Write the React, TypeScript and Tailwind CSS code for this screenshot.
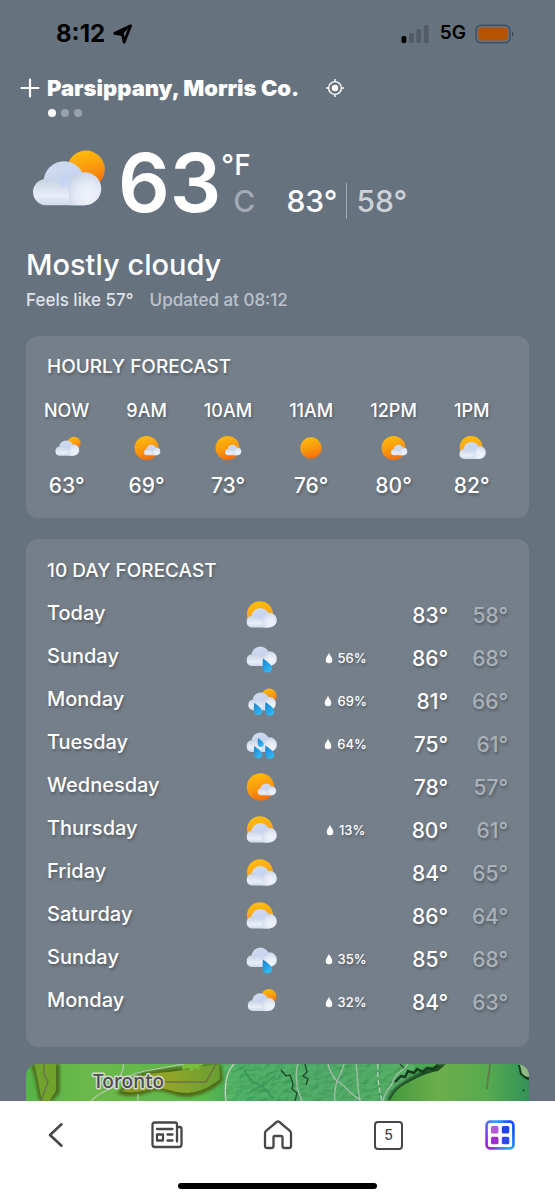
import type { ReactNode } from "react";

type Sky =
  | "mostlyCloudy"
  | "mostlySunny"
  | "sunny"
  | "partly"
  | "shower"
  | "sunShower"
  | "rain";

const hours: { label: string; sky: Sky; temp: number }[] = [
  { label: "NOW", sky: "mostlyCloudy", temp: 63 },
  { label: "9AM", sky: "mostlySunny", temp: 69 },
  { label: "10AM", sky: "mostlySunny", temp: 73 },
  { label: "11AM", sky: "sunny", temp: 76 },
  { label: "12PM", sky: "mostlySunny", temp: 80 },
  { label: "1PM", sky: "partly", temp: 82 },
];

const days: { day: string; sky: Sky; rain?: number; high: number; low: number }[] = [
  { day: "Today", sky: "partly", high: 83, low: 58 },
  { day: "Sunday", sky: "shower", rain: 56, high: 86, low: 68 },
  { day: "Monday", sky: "sunShower", rain: 69, high: 81, low: 66 },
  { day: "Tuesday", sky: "rain", rain: 64, high: 75, low: 61 },
  { day: "Wednesday", sky: "mostlySunny", high: 78, low: 57 },
  { day: "Thursday", sky: "partly", rain: 13, high: 80, low: 61 },
  { day: "Friday", sky: "partly", high: 84, low: 65 },
  { day: "Saturday", sky: "partly", high: 86, low: 64 },
  { day: "Sunday", sky: "shower", rain: 35, high: 85, low: 68 },
  { day: "Monday", sky: "mostlyCloudy", rain: 32, high: 84, low: 63 },
];

function Gradients() {
  return (
    <svg className="absolute size-0" aria-hidden="true">
      <defs>
        <linearGradient id="sun" x1="0.35" y1="0" x2="0.65" y2="1">
          <stop offset="0" stopColor="#fdbb0b" />
          <stop offset="0.5" stopColor="#fa9a0c" />
          <stop offset="1" stopColor="#f5690c" />
        </linearGradient>
        <linearGradient id="sunPale" x1="0.4" y1="0" x2="0.6" y2="1">
          <stop offset="0" stopColor="#fdbd0e" />
          <stop offset="0.6" stopColor="#f9a414" />
          <stop offset="1" stopColor="#f18a14" />
        </linearGradient>
        <linearGradient id="cloudMid" x1="0.2" y1="0" x2="0.7" y2="1">
          <stop offset="0" stopColor="#d2dcec" />
          <stop offset="0.5" stopColor="#c6d4f1" />
          <stop offset="1" stopColor="#dfe7f7" />
        </linearGradient>
        <linearGradient id="cloudBase" x1="0" y1="0" x2="0" y2="1">
          <stop offset="0" stopColor="#c6d2e4" />
          <stop offset="0.65" stopColor="#e9eef8" />
          <stop offset="1" stopColor="#cfd9ec" />
        </linearGradient>
        <radialGradient id="cloudRight" cx="0.6" cy="0.7" r="0.8">
          <stop offset="0" stopColor="#f1f4fa" />
          <stop offset="0.5" stopColor="#e3e9f5" />
          <stop offset="1" stopColor="#c0cde1" />
        </radialGradient>
        <linearGradient id="drop" x1="0" y1="0" x2="0.6" y2="1">
          <stop offset="0" stopColor="#1382d0" />
          <stop offset="1" stopColor="#35b9f4" />
        </linearGradient>
      </defs>
    </svg>
  );
}

function Cloud({ x, y, scale = 1 }: { x: number; y: number; scale?: number }) {
  return (
    <g transform={`translate(${x} ${y}) scale(${scale})`}>
      <circle cx="14" cy="8.8" r="8.8" fill="url(#cloudMid)" />
      <path
        d="M5.6 18.9A5.7 5.7 0 0 1 5.6 7.6C9 7.2 12 8.4 13.6 11.5L23 12v6.900z"
        fill="url(#cloudBase)"
      />
      <path
        d="M22.9 4.700a7.100 7.100 0 1 1 0 14.200H16.500c.4-2-.7-4.600-.7-7.100a7.100 7.100 0 0 1 7.100-7.100z"
        fill="url(#cloudRight)"
      />
    </g>
  );
}

function Drop({ x, y, scale = 1 }: { x: number; y: number; scale?: number }) {
  return (
    <path
      transform={`translate(${x} ${y}) scale(${scale})`}
      d="M0.6 0C3 2.2 9.6 5.6 9.6 10A4.7 4.7 0 0 1 0.3 10C0 7 0 3 .6 0z"
      fill="url(#drop)"
    />
  );
}

const skies: Record<Sky, ReactNode> = {
  mostlyCloudy: (
    <>
      <circle cx="24" cy="10.5" r="7.5" fill="url(#sun)" />
      <Cloud x={2.2} y={7.3} scale={0.93} />
    </>
  ),
  mostlySunny: (
    <>
      <circle cx="15.5" cy="16" r="13.7" fill="url(#sun)" />
      <Cloud x={12.3} y={12.4} scale={0.63} />
    </>
  ),
  sunny: <circle cx="16" cy="16" r="12.2" fill="url(#sun)" />,
  partly: (
    <>
      <circle cx="15" cy="15.2" r="13" fill="url(#sunPale)" />
      <Cloud x={1} y={9} scale={1.03} />
    </>
  ),
  shower: (
    <>
      <Cloud x={1} y={4.5} scale={1.03} />
      <Drop x={17.5} y={16.6} />
    </>
  ),
  sunShower: (
    <>
      <circle cx="24.2" cy="11" r="7.5" fill="url(#sun)" />
      <Cloud x={2.7} y={7.4} scale={0.94} />
      <Drop x={8.8} y={17.7} scale={0.88} />
      <Drop x={20} y={17} scale={0.98} />
    </>
  ),
  rain: (
    <>
      <Cloud x={1} y={4.5} scale={1.03} />
      <Drop x={12.7} y={10} scale={0.64} />
      <Drop x={8.8} y={18} scale={0.88} />
      <Drop x={20} y={17.5} scale={0.96} />
    </>
  ),
};

function SkyIcon({ sky, className }: { sky: Sky; className: string }) {
  return (
    <svg viewBox="0 0 32 32" className={className} aria-hidden="true">
      {skies[sky]}
    </svg>
  );
}

function StatusBar() {
  return (
    <div className="flex h-[67px] items-center justify-between pr-10 pl-14 text-black">
      <div className="flex items-center gap-2">
        <span className="text-2xl font-bold">8:12</span>
        <svg viewBox="0 0 20 20" className="size-5" aria-hidden="true">
          <path
            d="M17.6 1.8 1.8 9.3l7.8 1.3 1.5 7.6z"
            fill="none"
            stroke="black"
            strokeWidth="2.8"
            strokeLinejoin="round"
          />
          <path d="M17.6 1.8 9.6 10.6 1.8 9.3z" fill="black" />
        </svg>
      </div>
      <div className="flex items-center gap-[9px]">
        <svg viewBox="0 0 30 18" className="h-[18px] w-[30px]" aria-hidden="true">
          <rect x="0.5" y="11" width="4.8" height="7" rx="1.5" fill="black" />
          <rect x="8" y="8" width="4.8" height="10" rx="1.5" fill="#525c67" />
          <rect x="15.3" y="4" width="4.8" height="14" rx="1.5" fill="#525c67" />
          <rect x="22.8" y="0" width="4.8" height="18" rx="1.5" fill="#525c67" />
        </svg>
        <span className="text-[19px] font-semibold">5G</span>
        <svg viewBox="0 0 40 20" className="h-5 w-10" aria-hidden="true">
          <rect x="1" y="1.2" width="34" height="17.6" rx="5" fill="none" stroke="#3c4f66" strokeWidth="1.4" />
          <rect x="3.2" y="3.4" width="29.600" height="13.200" rx="3" fill="#b55300" />
          <path d="M37 7.5c2 .8 2 4.200 0 5z" fill="#3c4650" />
        </svg>
      </div>
    </div>
  );
}

function Header() {
  return (
    <header className="pl-5">
      <div className="flex h-[42px] items-center text-white">
        <button aria-label="Add location" className="mr-[7px]">
          <svg viewBox="0 0 20 20" className="size-5" aria-hidden="true">
            <path d="M10 1.500v17M1.500 10h17" stroke="white" strokeWidth="2.200" strokeLinecap="round" />
          </svg>
        </button>
        <h1 className="text-[22px] font-black">Parsippany, Morris Co.</h1>
        <button aria-label="Use current location" className="ml-[26px]">
          <svg viewBox="0 0 20 20" className="size-5" aria-hidden="true">
            <circle cx="10" cy="10" r="6.400" fill="none" stroke="white" strokeWidth="1.400" />
            <circle cx="10" cy="10" r="3.300" fill="white" />
            <path d="M10 1v2.600M10 16.400V19M1 10h2.600M16.400 10H19" stroke="white" strokeWidth="1.400" />
          </svg>
        </button>
      </div>
      <div className="flex gap-[5px] pl-7">
        <span className="size-2 rounded-full bg-white" />
        <span className="size-2 rounded-full bg-[#99a2ad]" />
        <span className="size-2 rounded-full bg-[#99a2ad]" />
      </div>
    </header>
  );
}

function Current() {
  return (
    <section className="px-[26px] text-white">
      <div className="flex h-32 items-center pt-1">
        <SkyIcon sky="mostlyCloudy" className="size-20" />
        <span className="ml-3 text-[81px] leading-none font-semibold">63</span>
        <div className="flex flex-col items-start">
          <button className="text-[28px] leading-9 font-medium">°F</button>
          <button className="pl-3 text-[30px] leading-9 font-medium text-[#a3aab3]">C</button>
        </div>
        <div className="ml-[31px] flex items-center pt-9 text-[30px] leading-9 font-medium">
          <span>83°</span>
          <span className="mx-[9px] h-9 w-px bg-[#a3aab3]" />
          <span className="text-[#cdd2d8]">58°</span>
        </div>
      </div>
      <h2 className="text-[29px] leading-10 font-medium">Mostly cloudy</h2>
      <p className="flex h-8 items-center gap-4 text-[17px] font-medium">
        <span className="text-[#dfe3e8]">Feels like 57°</span>
        <span className="text-[#bcc2ca]">Updated at 08:12</span>
      </p>
    </section>
  );
}

const panel =
  "rounded-xl bg-[#757f8a] text-white [text-shadow:1px_2px_3px_rgba(0,0,0,0.3)]";

function Hourly() {
  return (
    <section className={`${panel} pt-[19px] pb-5`}>
      <h2 className="px-[21px] text-[19px] leading-6 font-medium">HOURLY FORECAST</h2>
      <ul className="flex gap-[37px] overflow-hidden px-[18px] pt-5">
        {hours.map((h) => (
          <li key={h.label} className="flex flex-col items-center">
            <span className="text-lg leading-6 font-medium">{h.label}</span>
            <SkyIcon sky={h.sky} className="mt-[11px] mb-3 size-7" />
            <span className="text-[21px] leading-6 font-medium">{h.temp}°</span>
          </li>
        ))}
      </ul>
    </section>
  );
}

function Daily() {
  return (
    <section className={`${panel} px-[21px] pt-5 pb-6`}>
      <h2 className="pb-2.5 text-[19px] leading-6 font-medium">10 DAY FORECAST</h2>
      <table className="w-full table-fixed text-[21px] leading-6">
        <colgroup>
          <col className="w-[37%]" />
          <col className="w-[19%]" />
          <col className="w-[18%]" />
          <col className="w-[13%]" />
          <col className="w-[13%]" />
        </colgroup>
        <tbody>
          {days.map((d, i) => (
            <tr key={i} className="h-[43px]">
              <th scope="row" className="pb-1 text-left text-xl leading-6 font-medium">
                {d.day}
              </th>
              <td>
                <SkyIcon sky={d.sky} className="mx-auto size-8" />
              </td>
              <td>
                {d.rain !== undefined && (
                  <span className="flex items-center justify-center gap-[5px] pr-0.5 text-[13px] leading-6 font-medium">
                    <svg viewBox="0 0 8 12" className="h-3 w-2" aria-hidden="true">
                      <path d="M4 .8C4.800 3.500 7.300 5.300 7.300 7.900a3.300 3.300 0 0 1-6.600 0C.7 5.300 3.200 3.500 4 .8z" fill="white" />
                    </svg>
                    {d.rain}%
                  </span>
                )}
              </td>
              <td className="pt-0.5 text-right font-medium">{d.high}°</td>
              <td className="pt-0.5 text-right font-medium text-[#aab1b9]">{d.low}°</td>
            </tr>
          ))}
        </tbody>
      </table>
    </section>
  );
}

function RadarMap() {
  return (
    <section className="overflow-hidden rounded-t-xl">
      <svg
        viewBox="0 0 503 37"
        preserveAspectRatio="xMidYMin slice"
        className="block h-[37px] w-full"
        role="img"
        aria-label="Weather map around Toronto"
      >
        <defs>
          <linearGradient id="land">
            <stop offset="0" stopColor="#55b548" />
            <stop offset="0.12" stopColor="#6cb84a" />
            <stop offset="0.35" stopColor="#5cb94c" />
            <stop offset="0.43" stopColor="#3ba75b" />
            <stop offset="0.6" stopColor="#3da05a" />
            <stop offset="0.75" stopColor="#44a557" />
            <stop offset="0.88" stopColor="#5bab50" />
            <stop offset="1" stopColor="#3b9c54" />
          </linearGradient>
          <linearGradient id="lake">
            <stop offset="0" stopColor="#84951f" />
            <stop offset="0.5" stopColor="#90a528" />
            <stop offset="1" stopColor="#679f34" />
          </linearGradient>
          <linearGradient id="ocean">
            <stop offset="0" stopColor="#45993f" />
            <stop offset="0.35" stopColor="#6cae4b" />
            <stop offset="0.7" stopColor="#57aa50" />
            <stop offset="1" stopColor="#329257" />
          </linearGradient>
          <filter id="soft" x="-20%" y="-20%" width="140%" height="140%">
            <feGaussianBlur stdDeviation="1.600" />
          </filter>
          <filter id="relief" x="0" y="0" width="100%" height="100%">
            <feTurbulence type="fractalNoise" baseFrequency="0.13 0.22" numOctaves="3" seed="7" />
            <feDiffuseLighting surfaceScale="2" lightingColor="#8dd89a">
              <feDistantLight azimuth="225" elevation="48" />
            </feDiffuseLighting>
          </filter>
        </defs>
        <rect width="503" height="37" fill="url(#land)" />
        <g opacity="0.28">
          <rect x="198" width="190" height="37" filter="url(#relief)" />
        </g>
        <path d="M4 0C8 8 9 18 13 37h14c2-5 7-5 7-10V0z" fill="#4c7020" filter="url(#soft)" />
        <path d="M8 0c3 10 5 24 8 37h8c2-6 6-8 6-12V0z" fill="#71a22c" />
        <path d="M18 0v10l4 8-7 19" fill="none" stroke="#68744f" strokeWidth="1.500" />
        <path
          d="M91 29c8-8 14-17 28-21 16-3 30-5 42-5 14-5 25-2 34-2l2 16c-6 6-18 14-35 16-14 0-20-7-34-6-12 4-26 8-37 2z"
          fill="#4f6a18"
          filter="url(#soft)"
        />
        <path
          d="M96 27c9-8 14-15 27-17 15-2 27-2 39-5 9-3 19-4 31-4l1 14c-7 6-18 13-32 14-14 0-20-5-35-5-12 4-22 6-31 3z"
          fill="url(#lake)"
        />
        <path d="M155 0l2 6 5-2 4 3 2-3 6 2-1-3 5-3z" fill="#79bf3f" />
        <path d="M138 18h42l10-18" fill="none" stroke="#706f45" strokeWidth="1.500" />
        <path d="M65 37c8-9 18-10 24-16 4-5 20-12 30-14l39-7M112 37v-7M97 0c2 6-3 10-5 18" fill="none" stroke="#bcc6b2" strokeWidth="1.200" />
        <path d="M208 0c-8 8-10 20-8 37" fill="none" stroke="#c5d0c6" strokeWidth="1.300" />
        <path d="M218 6l8 12 10 4 12 13M224 28l16-9 10-8" fill="none" stroke="#27854f" strokeWidth="2" opacity="0.5" />
        <path
          d="M272 0c-4 12 0 18-1 24l5 13M302 0c2 8 4 12 9 17M318 0c-2 8-4 12-7 17-2 7-3 13-2 20M311 17c8 3 10 12 24 19M330 0c2 12 1 22 4 37M382 0c-4 7-14 9-15 18-3 6-8 9-10 19"
          fill="none"
          stroke="#a9bda9"
          strokeWidth="1.300"
        />
        <path d="M352 0c-1 14 1 24 4 37" fill="none" stroke="#b8cdb8" strokeWidth="1.300" strokeDasharray="5 3" />
        <path d="M255 6l5 6 4-1 3 9-1 5 5 4-2 8M279 0l2 8-4 4 5 3-2 6M378 4l-4-4" fill="none" stroke="#1f4b2c" strokeWidth="1.400" />
        <path d="M361 37c5-14 14-17 22-23 10-4 14-10 26-10l3-4h85c1 4 2 8 6 12v25z" fill="#1f4a20" filter="url(#soft)" />
        <path d="M364 37c5-12 12-15 21-20 10-5 15-8 27-10l8-7h74l3 12 6 5v20z" fill="url(#ocean)" />
        <path d="M369 18l6-6 4 1 3-6 6 2 3-4 6 3 4-4 6 1 5-4" fill="none" stroke="#173c1d" strokeWidth="2.400" />
        <path d="M464 0c0 9-3 15-3 25" fill="none" stroke="#5d7f48" strokeWidth="2" />
        <path d="M493 0h10v13l-5-1-4-5z" fill="#93b985" />
        <path d="M493 1l2 9 5 4 3 1M497 26l1 1" fill="none" stroke="#173c1d" strokeWidth="2" />
        <text
          x="67"
          y="24"
          className="font-['Noto_Sans'] text-[19px] font-medium"
          fill="#4c4d50"
          stroke="#d5d9d0"
          strokeWidth="3"
          strokeLinejoin="round"
          paintOrder="stroke"
        >
          Toronto
        </text>
      </svg>
    </section>
  );
}

function TabBar() {
  return (
    <nav className="mt-auto bg-white pb-[11px] text-[#47474a]">
      <div className="grid h-[68px] grid-cols-5 place-items-center">
        <button aria-label="Back">
          <svg viewBox="0 0 32 32" className="size-8" aria-hidden="true">
            <path d="M21.500 5.300 10 16l11.500 10.700" fill="none" stroke="currentColor" strokeWidth="2.600" strokeLinecap="round" strokeLinejoin="round" />
          </svg>
        </button>
        <button aria-label="News">
          <svg viewBox="0 0 32 32" className="size-8" fill="none" stroke="currentColor" strokeWidth="2.300" strokeLinejoin="round" strokeLinecap="round" aria-hidden="true">
            <path d="M26 22.500V5.500a2 2 0 0 0-2-2H3.500a2 2 0 0 0-2 2v20a2.500 2.500 0 0 0 2.500 2.500h24a2.500 2.500 0 0 0 2.500-2.500V10a2 2 0 0 0-2-2H26" />
            <path d="M6 10h15.500M16.500 15.500h5M16.500 21.500h5" />
            <rect x="6" y="15.500" width="6" height="6" />
          </svg>
        </button>
        <button aria-label="Home">
          <svg viewBox="0 0 32 32" className="size-8" fill="none" stroke="currentColor" strokeWidth="2.300" strokeLinejoin="round" aria-hidden="true">
            <path d="M3 14.200a3 3 0 0 1 1.100-2.300L14.600 3a2.200 2.200 0 0 1 2.800 0l10.500 8.900a3 3 0 0 1 1.100 2.300V27a2 2 0 0 1-2 2h-4.500a2 2 0 0 1-2-2v-8.500a1.500 1.500 0 0 0-1.500-1.500h-6a1.500 1.500 0 0 0-1.500 1.500V27a2 2 0 0 1-2 2H5a2 2 0 0 1-2-2z" />
          </svg>
        </button>
        <button
          aria-label="5 open tabs"
          className="flex size-[29px] items-center justify-center rounded-[4px] border-2 border-[#47474a] text-sm font-medium"
        >
          5
        </button>
        <button aria-label="Apps">
          <svg viewBox="0 0 32 32" className="size-8" aria-hidden="true">
            <defs>
              <linearGradient id="frame" x1="0" y1="0.800" x2="1" y2="0.300">
                <stop offset="0" stopColor="#a01ee0" />
                <stop offset="0.3" stopColor="#5b6cf5" />
                <stop offset="0.6" stopColor="#2ea4ff" />
                <stop offset="1" stopColor="#1450ff" />
              </linearGradient>
            </defs>
            <rect x="2.600" y="2.600" width="26.800" height="26.800" rx="3.500" fill="none" stroke="url(#frame)" strokeWidth="2.600" />
            <rect x="7" y="7" width="7.500" height="7.500" rx="1.600" fill="#b45bd6" />
            <rect x="17.800" y="7" width="7.500" height="7.500" rx="1.600" fill="#2340ee" />
            <rect x="7" y="17.800" width="7.500" height="7.500" rx="1.600" fill="#9a2fd0" />
            <rect x="17.800" y="17.800" width="7.500" height="7.500" rx="1.600" fill="#2f48ea" />
          </svg>
        </button>
      </div>
      <div className="pt-[14px]">
        <div className="mx-auto h-1.5 w-[36%] rounded-full bg-black" />
      </div>
    </nav>
  );
}

export default function App() {
  return (
    <div className="flex min-h-screen flex-col bg-[#67727f] font-['Inter',sans-serif]">
      <Gradients />
      <StatusBar />
      <Header />
      <Current />
      <main className="flex flex-col px-[26px] pt-[19px]">
        <Hourly />
        <div className="pt-[21px] pb-[17px]">
          <Daily />
        </div>
        <RadarMap />
      </main>
      <TabBar />
    </div>
  );
}
